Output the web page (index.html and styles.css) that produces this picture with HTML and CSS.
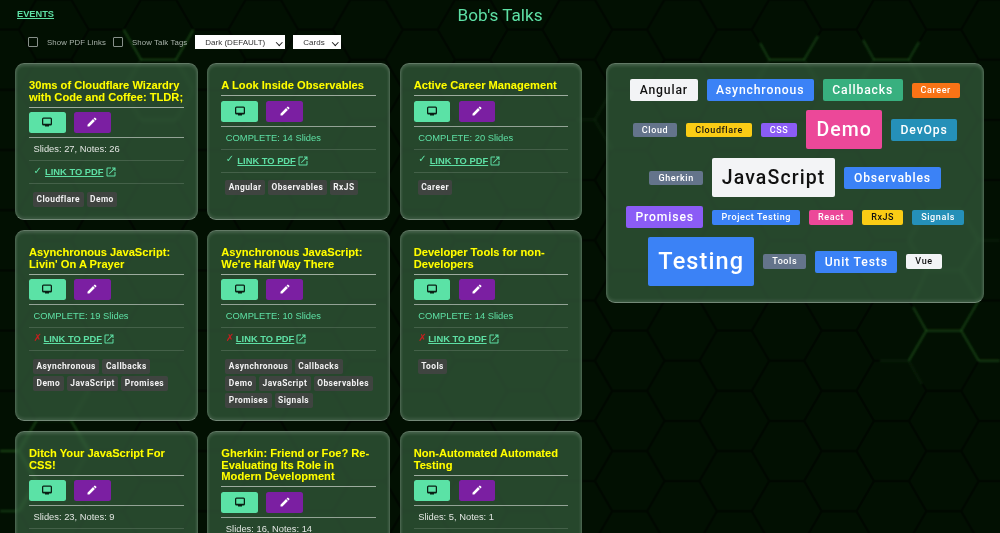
FILE: index.html
```html
<!DOCTYPE html>
<html lang="en">
<head>
<meta charset="utf-8">
<title>Bob's Talks</title>
<link rel="stylesheet" href="styles.css">
</head>
<body>
<svg class="backdrop" width="1000" height="533" viewBox="0 0 1000 533" aria-hidden="true">
  <defs>
    <pattern id="hex" width="104.7" height="60.2" patternUnits="userSpaceOnUse" patternTransform="translate(1.45 -0.5)">
      <path class="hex-line" d="M17.45 30.1 34.9 0H69.8L87.25 30.1 69.8 60.2H34.9ZM0 30.1H17.45M87.25 30.1H104.7"/>
    </pattern>
    <filter id="soft" x="-20%" y="-20%" width="140%" height="140%"><feGaussianBlur stdDeviation="0.9"/></filter>
    <symbol id="i-monitor" viewBox="0 0 24 24"><path d="M5 3h14a3 3 0 0 1 3 3v10a3 3 0 0 1-3 3h-3v2H8v-2H5a3 3 0 0 1-3-3V6a3 3 0 0 1 3-3Zm0 2.500a.5.5 0 0 0-.5.5v9.500h15V6a.5.5 0 0 0-.5-.5Z"/></symbol>
    <symbol id="i-pencil" viewBox="0 0 24 24"><path d="M3 17.250V21h3.750L17.810 9.940l-3.750-3.750L3 17.250ZM20.710 7.040a1 1 0 0 0 0-1.410l-2.340-2.340a1 1 0 0 0-1.410 0l-1.830 1.830 3.750 3.750 1.830-1.830Z"/></symbol>
    <symbol id="i-open" viewBox="0 0 24 24"><path d="M19 19H5V5h7V3H5a2 2 0 0 0-2 2v14c0 1.100.9 2 2 2h14c1.100 0 2-.9 2-2v-7h-2v7ZM14 3v2h3.590l-9.830 9.830 1.410 1.410L19 6.410V10h2V3h-7Z"/></symbol>
  </defs>
  <rect class="hex-fill" width="1000" height="533"/>
  <rect width="1000" height="533" fill="url(#hex)"/>
  <g class="glow" filter="url(#soft)">
    <path class="g-strong" d="M913 307 926.300 330.600H961.200L978.650 300.500M961.200 330.600 978.650 360.700H1000M926.300 330.600 908.850 360.700"/>
    <path class="g-mid" d="M908.850 360.700H880M908.850 360.700 922 384M926.300 270.400H961.200L978.650 240.300 961.200 210.200H926.300L908.850 240.300 926.300 270.400 913 300M961.200 270.400 978.650 300.500M978.650 240.300H1000"/>
    <path class="g-strong" d="M760 43 769.250 59.700H804.150L818 36M863 40 873.950 59.700H908.850L919 42"/>
    <path class="g-mid" d="M769.250 59.700 752 90M804.150 59.700 821.600 89.800M873.950 59.700 856.500 89.800M908.850 59.700 926.300 89.800"/>
    <path class="g-strong" d="M123.600 29.600 141.050 59.700H175.950L193.400 29.600"/>
    <path class="g-mid" d="M141.050 59.700 123.600 89.800 141.050 120H175.950L193.400 89.800 175.950 59.700M123.600 89.800 141 120"/>
    <path class="g-strong" d="M36.350 420.900 18.900 451 36.350 481.100 18.900 511.200H0M18.900 451H0M71.250 420.900 88.700 451"/>
    <path class="g-mid" d="M36.350 420.900H71.250M88.700 451 71.250 481.100H36.350M71.250 360.700 88.700 390.800 71.250 420.900"/>
    <path class="g-mid" d="M577.300 119.900H594.750L612.200 89.800M594.750 119.900 612.200 150"/>
  </g>
</svg>

<header class="topbar">
  <a class="events" href="#">EVENTS</a>
  <h1 class="page-title">Bob's Talks</h1>
</header>

<form class="controls">
  <label class="toggle"><input type="checkbox"><span>Show PDF Links</span></label>
  <label class="toggle"><input type="checkbox"><span>Show Talk Tags</span></label>
  <span class="pick-wrap"><select class="pick pick-theme"><option>Dark (DEFAULT)</option></select></span>
  <span class="pick-wrap"><select class="pick pick-view"><option>Cards</option></select></span>
</form>

<main class="layout">
  <section class="cards">

    <article class="card">
      <h2 class="card-title">30ms of Cloudflare Wizardry with Code and Coffee: TLDR;</h2>
      <div class="actions">
        <button class="btn btn-view" type="button"><svg class="ico"><use href="#i-monitor"/></svg></button>
        <button class="btn btn-edit" type="button"><svg class="ico"><use href="#i-pencil"/></svg></button>
      </div>
      <p class="stat">Slides: 27, Notes: 26</p>
      <p class="pdf"><span class="mark yes">✓</span><a href="#">LINK TO PDF</a><svg class="ico-open"><use href="#i-open"/></svg></p>
      <div class="tags"><span class="tag">Cloudflare</span><span class="tag">Demo</span></div>
    </article>

    <article class="card">
      <h2 class="card-title">A Look Inside Observables</h2>
      <div class="actions">
        <button class="btn btn-view" type="button"><svg class="ico"><use href="#i-monitor"/></svg></button>
        <button class="btn btn-edit" type="button"><svg class="ico"><use href="#i-pencil"/></svg></button>
      </div>
      <p class="stat done">COMPLETE: 14 Slides</p>
      <p class="pdf"><span class="mark yes">✓</span><a href="#">LINK TO PDF</a><svg class="ico-open"><use href="#i-open"/></svg></p>
      <div class="tags"><span class="tag">Angular</span><span class="tag">Observables</span><span class="tag">RxJS</span></div>
    </article>

    <article class="card">
      <h2 class="card-title">Active Career Management</h2>
      <div class="actions">
        <button class="btn btn-view" type="button"><svg class="ico"><use href="#i-monitor"/></svg></button>
        <button class="btn btn-edit" type="button"><svg class="ico"><use href="#i-pencil"/></svg></button>
      </div>
      <p class="stat done">COMPLETE: 20 Slides</p>
      <p class="pdf"><span class="mark yes">✓</span><a href="#">LINK TO PDF</a><svg class="ico-open"><use href="#i-open"/></svg></p>
      <div class="tags"><span class="tag">Career</span></div>
    </article>

    <article class="card">
      <h2 class="card-title">Asynchronous JavaScript: Livin' On A Prayer</h2>
      <div class="actions">
        <button class="btn btn-view" type="button"><svg class="ico"><use href="#i-monitor"/></svg></button>
        <button class="btn btn-edit" type="button"><svg class="ico"><use href="#i-pencil"/></svg></button>
      </div>
      <p class="stat done">COMPLETE: 19 Slides</p>
      <p class="pdf"><span class="mark no">✗</span><a href="#">LINK TO PDF</a><svg class="ico-open"><use href="#i-open"/></svg></p>
      <div class="tags"><span class="tag">Asynchronous</span><span class="tag">Callbacks</span><span class="tag">Demo</span><span class="tag">JavaScript</span><span class="tag">Promises</span></div>
    </article>

    <article class="card">
      <h2 class="card-title">Asynchronous JavaScript: We're Half Way There</h2>
      <div class="actions">
        <button class="btn btn-view" type="button"><svg class="ico"><use href="#i-monitor"/></svg></button>
        <button class="btn btn-edit" type="button"><svg class="ico"><use href="#i-pencil"/></svg></button>
      </div>
      <p class="stat done">COMPLETE: 10 Slides</p>
      <p class="pdf"><span class="mark no">✗</span><a href="#">LINK TO PDF</a><svg class="ico-open"><use href="#i-open"/></svg></p>
      <div class="tags"><span class="tag">Asynchronous</span><span class="tag">Callbacks</span><span class="tag">Demo</span><span class="tag">JavaScript</span><span class="tag">Observables</span><span class="tag">Promises</span><span class="tag">Signals</span></div>
    </article>

    <article class="card">
      <h2 class="card-title">Developer Tools for non-Developers</h2>
      <div class="actions">
        <button class="btn btn-view" type="button"><svg class="ico"><use href="#i-monitor"/></svg></button>
        <button class="btn btn-edit" type="button"><svg class="ico"><use href="#i-pencil"/></svg></button>
      </div>
      <p class="stat done">COMPLETE: 14 Slides</p>
      <p class="pdf"><span class="mark no">✗</span><a href="#">LINK TO PDF</a><svg class="ico-open"><use href="#i-open"/></svg></p>
      <div class="tags"><span class="tag">Tools</span></div>
    </article>

    <article class="card">
      <h2 class="card-title">Ditch Your JavaScript For CSS!</h2>
      <div class="actions">
        <button class="btn btn-view" type="button"><svg class="ico"><use href="#i-monitor"/></svg></button>
        <button class="btn btn-edit" type="button"><svg class="ico"><use href="#i-pencil"/></svg></button>
      </div>
      <p class="stat">Slides: 23, Notes: 9</p>
    </article>

    <article class="card">
      <h2 class="card-title">Gherkin: Friend or Foe? Re-Evaluating Its Role in Modern Development</h2>
      <div class="actions">
        <button class="btn btn-view" type="button"><svg class="ico"><use href="#i-monitor"/></svg></button>
        <button class="btn btn-edit" type="button"><svg class="ico"><use href="#i-pencil"/></svg></button>
      </div>
      <p class="stat">Slides: 16, Notes: 14</p>
    </article>

    <article class="card">
      <h2 class="card-title">Non-Automated Automated Testing</h2>
      <div class="actions">
        <button class="btn btn-view" type="button"><svg class="ico"><use href="#i-monitor"/></svg></button>
        <button class="btn btn-edit" type="button"><svg class="ico"><use href="#i-pencil"/></svg></button>
      </div>
      <p class="stat">Slides: 5, Notes: 1</p>
    </article>

  </section>

  <aside class="cloud">
    <span class="word m white">Angular</span>
    <span class="word m blue">Asynchronous</span>
    <span class="word m green">Callbacks</span>
    <span class="word s orange">Career</span>
    <span class="word s gray">Cloud</span>
    <span class="word s yellow">Cloudflare</span>
    <span class="word s purple">CSS</span>
    <span class="word l pink">Demo</span>
    <span class="word m teal">DevOps</span>
    <span class="word s gray">Gherkin</span>
    <span class="word l white">JavaScript</span>
    <span class="word m blue">Observables</span>
    <span class="word m purple">Promises</span>
    <span class="word s blue">Project Testing</span>
    <span class="word s pink">React</span>
    <span class="word s yellow">RxJS</span>
    <span class="word s teal">Signals</span>
    <span class="word xl blue">Testing</span>
    <span class="word s gray">Tools</span>
    <span class="word m blue">Unit Tests</span>
    <span class="word s white">Vue</span>
  </aside>
</main>
</body>
</html>
```

FILE: styles.css
```css
* { box-sizing: border-box; }

html, body {
  margin: 0;
  height: 533px;
  overflow: hidden;
}

body {
  background: #021002;
  color: #fff;
  font-family: "Liberation Sans", Arial, sans-serif;
}

.backdrop {
  position: fixed;
  top: 0;
  left: 0;
  z-index: -1;
}

.hex-fill { fill: #021002; }
.hex-line { fill: none; stroke: #000; stroke-width: 2.4; stroke-opacity: 0.5; }
.glow { fill: none; }
.g-strong { stroke: #3fb53a; stroke-width: 1.3; stroke-opacity: 0.5; }
.g-mid { stroke: #3fb53a; stroke-width: 1.3; stroke-opacity: 0.22; }

.topbar {
  display: grid;
  grid-template-columns: 1fr auto 1fr;
  align-items: start;
  height: 35px;
  padding: 8px 17px 0;
}

.events {
  grid-column: 1;
  grid-row: 1;
  justify-self: start;
  font-size: 9.250px;
  font-weight: 700;
  line-height: 12px;
  color: #5ee0a5;
}

.page-title {
  grid-column: 2;
  grid-row: 1;
  margin: -3px 0 0;
  font-family: Roboto, sans-serif;
  font-size: 17.100px;
  font-weight: 400;
  line-height: 21px;
  color: #5ee0a5;
}

.controls {
  display: flex;
  align-items: center;
  gap: 8px;
  height: 14px;
  margin: 0 0 14px;
  padding-left: 28px;
}

.toggle {
  display: flex;
  align-items: center;
  gap: 9px;
  font-size: 7.800px;
  letter-spacing: 0.1px;
  color: #a9b3ab;
}

.toggle input {
  appearance: none;
  width: 10px;
  height: 10px;
  margin: 0;
  border: 1px solid #87908a;
  border-radius: 1px;
  background: transparent;
}

.toggle + .toggle { margin-left: -1px; }

.pick-wrap {
  position: relative;
  display: block;
  height: 14px;
}

.pick-wrap::after {
  content: "";
  position: absolute;
  top: 4.500px;
  right: 3.500px;
  width: 3.500px;
  height: 3.500px;
  border-right: 1.300px solid #222;
  border-bottom: 1.300px solid #222;
  transform: rotate(45deg);
  pointer-events: none;
}

.pick {
  display: block;
  appearance: none;
  height: 14px;
  padding: 0 0 0 10px;
  border: 0;
  border-radius: 0;
  background: #fff;
  color: #333;
  font-family: "Liberation Sans", Arial, sans-serif;
  font-size: 8px;
}

.pick-theme { width: 90px; }
.pick-view { width: 48px; }

.layout {
  display: grid;
  grid-template-columns: 567.500px 378px;
  column-gap: 23.500px;
  align-items: start;
  padding-left: 15px;
}

.cards {
  display: grid;
  grid-template-columns: repeat(3, 1fr);
  gap: 10.500px 9.500px;
}

.card,
.cloud {
  border: 1px solid rgba(255, 255, 255, 0.16);
  border-top-color: rgba(255, 255, 255, 0.28);
  border-bottom-color: rgba(255, 255, 255, 0.36);
  border-radius: 9px;
  background: rgba(72, 122, 84, 0.52);
  box-shadow: inset 0 2px 3px rgba(255, 255, 255, 0.14), inset 0 -2px 3px rgba(255, 255, 255, 0.1);
  backdrop-filter: blur(1.500px);
}

.card {
  display: flex;
  flex-direction: column;
  padding: 16px 13px 12px;
}

.card-title {
  margin: 0;
  padding-bottom: 3.500px;
  border-bottom: 1px solid rgba(255, 255, 255, 0.55);
  color: #ff0;
  font-size: 11.150px;
  font-weight: 700;
  line-height: 11.500px;
  text-shadow: 0 0 1px rgba(120, 120, 0, 0.7);
}

.actions {
  display: flex;
  gap: 8.500px;
  padding: 4.500px 0 4px;
  border-bottom: 1px solid rgba(255, 255, 255, 0.5);
}

.btn {
  display: flex;
  align-items: center;
  justify-content: center;
  width: 36.500px;
  height: 21px;
  padding: 0;
  border: 0;
  border-radius: 2.500px;
}

.btn-view { background: #5be2a6; color: #0a1f14; }
.btn-edit { background: #7b1fa2; color: #fff; }

.ico {
  width: 12px;
  height: 12px;
  fill: currentColor;
  margin-top: -1px;
}

.stat {
  margin: 0;
  padding: 1px 0 0 4.500px;
  height: 23px;
  border-bottom: 1px solid rgba(255, 255, 255, 0.14);
  font-size: 9.350px;
  line-height: 21px;
  color: #e2e6e2;
}

.stat.done { color: #5ee0a5; }

.pdf {
  display: flex;
  align-items: center;
  height: 23px;
  margin: 0;
  padding-left: 4.500px;
  border-bottom: 1px solid rgba(255, 255, 255, 0.14);
}

.pdf a {
  color: #5ee0a5;
  font-size: 9.350px;
  font-weight: 700;
}

.mark {
  width: 11.500px;
  margin-top: -3px;
  font-family: "DejaVu Sans", sans-serif;
  font-size: 10px;
  line-height: 10px;
}

.mark.yes { color: #5ee0a5; }
.mark.no { width: 10px; color: #c81e1e; }

.ico-open {
  width: 12px;
  height: 12px;
  margin-left: 1px;
  fill: #5ee0a5;
}

.tags {
  display: flex;
  flex-wrap: wrap;
  gap: 2px 3px;
  padding: 7.500px 0 0 4px;
}

.tag {
  height: 15px;
  padding: 0 3.500px;
  border-radius: 2px;
  background: rgba(68, 68, 68, 0.85);
  font-family: Roboto, sans-serif;
  font-size: 8.400px;
  font-weight: 700;
  line-height: 15px;
  letter-spacing: 0.45px;
  color: #f2f2f2;
}

.cloud {
  display: flex;
  flex-wrap: wrap;
  align-items: center;
  align-content: center;
  justify-content: center;
  gap: 9px;
  height: 240px;
  padding: 16px 12px 17px;
}

.word {
  border-radius: 2px;
  font-family: Roboto, sans-serif;
  font-weight: 500;
  white-space: nowrap;
}

.word.s { padding: 0 9px; font-size: 9px; line-height: 14.500px; letter-spacing: 0.6px; }
.word.m { padding: 0 9.500px; font-size: 12.200px; line-height: 22px; letter-spacing: 0.85px; }
.word.l { padding: 0 10px; font-size: 19.500px; line-height: 39px; letter-spacing: 1.100px; }
.word.xl { padding: 0 10px; font-size: 23.500px; line-height: 48.500px; letter-spacing: 1.100px; }

.white { background: #f3f4f6; color: #111; }
.blue { background: #3b82f6; color: #fff; }
.green { background: #38b07f; color: #fff; }
.orange { background: #f97316; color: #fff; }
.gray { background: #64748b; color: #fff; }
.yellow { background: #facc15; color: #111; }
.purple { background: #8b5cf6; color: #fff; }
.pink { background: #ec4899; color: #fff; }
.teal { background: #2590b8; color: #fff; }
```
